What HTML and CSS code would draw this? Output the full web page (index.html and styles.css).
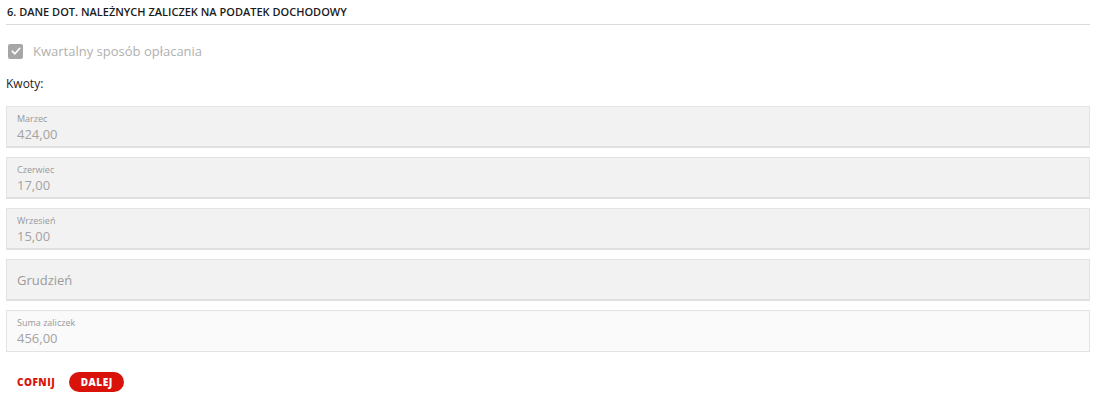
FILE: index.html
```html
<!DOCTYPE html>
<html lang="pl">
<head>
<meta charset="utf-8">
<link rel="stylesheet" href="styles.css">
</head>
<body>
<div class="page">
  <h2 class="section-title">6. DANE DOT. NALEŻNYCH ZALICZEK NA PODATEK DOCHODOWY</h2>
  <label class="check">
    <span class="box"><svg viewBox="0 0 14 14" width="14" height="14"><path d="M3.2 7.2 L5.9 9.8 L10.8 4.3" fill="none" stroke="#fff" stroke-width="1.6" stroke-linecap="round" stroke-linejoin="round"/></svg></span>
    <span class="check-label">Kwartalny sposób opłacania</span>
  </label>
  <div class="amounts-label">Kwoty:</div>
  <div class="fields">
    <div class="field"><span class="f-label">Marzec</span><span class="f-value">424,00</span></div>
    <div class="field"><span class="f-label">Czerwiec</span><span class="f-value">17,00</span></div>
    <div class="field"><span class="f-label">Wrzesień</span><span class="f-value">15,00</span></div>
    <div class="field empty"><span class="f-placeholder">Grudzień</span></div>
    <div class="field sum"><span class="f-label">Suma zaliczek</span><span class="f-value">456,00</span></div>
  </div>
  <div class="actions">
    <button class="btn-link">COFNIJ</button>
    <button class="btn-primary">DALEJ</button>
  </div>
</div>
</body>
</html>
```
FILE: styles.css
```css
* { box-sizing: border-box; }
html, body { margin: 0; padding: 0; background: #fff; }
body { font-family: "Open Sans", "Noto Sans", sans-serif; color: #222; }
.page { padding: 5px 14px 0 6px; }
.section-title {
  margin: 0;
  font-size: 11px;
  font-weight: 600;
  color: #1a1a1a;
  padding: 0 0 5px 1px;
  border-bottom: 1px solid #dcdcdc;
  line-height: 14px;
}
.check { display: flex; align-items: center; gap: 10px; margin-top: 18px; padding-left: 2px; height: 16px; }
.box { width: 15px; height: 15px; background: #a6a6a6; border-radius: 2px; display: flex; align-items: center; justify-content: center; }
.box svg { display: block; }
.check-label { font-size: 13px; color: #b0b0b0; }
.amounts-label { font-size: 12px; color: #222; margin-top: 17px; line-height: 16px; }
.fields { display: flex; flex-direction: column; gap: 9px; margin-top: 14px; }
.field {
  height: 42px;
  background: #f2f2f2;
  border: 1px solid #e3e3e3;
  border-bottom: 2px solid #e0e0e0;
  padding: 5px 10px 0;
  display: flex;
  flex-direction: column;
}
.field.empty { justify-content: center; padding-top: 0; }
.field.sum { background: #fafafa; border-bottom-width: 1px; border-color: #e3e3e3; }
.f-label { font-size: 9px; color: #999; line-height: 13px; }
.f-value { font-size: 13px; color: #a3a3a3; line-height: 18px; }
.f-placeholder { font-size: 13px; color: #9c9c9c; }
.actions { display: flex; align-items: center; gap: 14px; margin-top: 20px; padding-left: 11px; }
.btn-link { background: none; border: 0; padding: 0; color: #d9120a; font-family: "Open Sans", sans-serif; font-weight: 800; font-size: 10px; letter-spacing: 0.5px; cursor: pointer; }
.btn-primary { background: #d9120a; color: #fff; border: 0; border-radius: 10px; height: 20px; width: 55px; font-family: "Open Sans", sans-serif; font-weight: 800; font-size: 10px; letter-spacing: 0.5px; cursor: pointer; }
```
